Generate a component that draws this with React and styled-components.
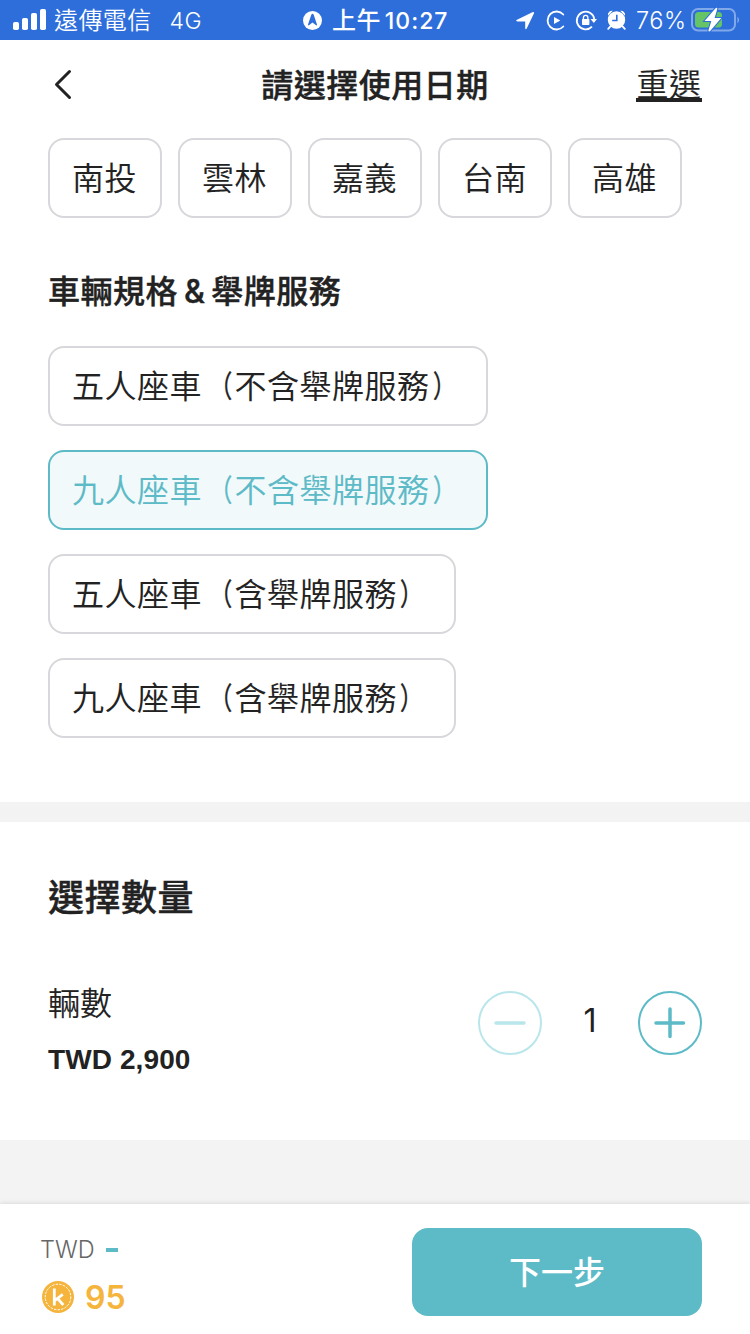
import React, { useState } from 'react'
import styled, { createGlobalStyle } from 'styled-components'

const GlobalStyle = createGlobalStyle`
  * {
    box-sizing: border-box;
  }
  body {
    margin: 0;
    background: #fff;
    color: #222;
    font-family: Inter, 'Noto Sans CJK TC', sans-serif;
  }
  button {
    font: inherit;
    color: inherit;
    background: none;
    border: 0;
    padding: 0;
  }
  h1, h2, p {
    margin: 0;
  }
  svg {
    display: block;
    flex: none;
  }
`

const Screen = styled.div`
  width: 750px;
  height: 1334px;
  display: flex;
  flex-direction: column;
  overflow: hidden;
`

const StatusBar = styled.div`
  height: 40px;
  flex: none;
  display: flex;
  align-items: center;
  background: #2e6edb;
  color: #fff;
  font-size: 24px;
  line-height: 40px;
  white-space: nowrap;
`

const StatusLeft = styled.div`
  width: 302px;
  padding-left: 13px;
  display: flex;
  align-items: center;
`

const Carrier = styled.span`
  margin-left: 8px;
  padding-top: 2px;
  font-size: 24px;
  letter-spacing: .4px;
  font-weight: 350;
`

const Network = styled.span`
  margin-left: 18px;
  padding-top: 2px;
  font-size: 23px;
  letter-spacing: .5px;
  font-weight: 350;
`

const Clock = styled.div`
  width: 213px;
  display: flex;
  align-items: center;
  gap: 10px;
  font-weight: 500;
  span {
    padding-top: 1px;
    letter-spacing: .4px;
  }
  b {
    font-weight: 550;
    font-size: 23px;
    letter-spacing: 1px;
    margin-left: 4px;
  }
`

const StatusRight = styled.div`
  display: flex;
  align-items: center;
`

const Percent = styled.span`
  width: 55px;
  padding-top: 2px;
  font-size: 23.5px;
  font-weight: 350;
  letter-spacing: .5px;
`

const Header = styled.header`
  height: 98px;
  flex: none;
  display: grid;
  grid-template-columns: 150px 1fr 150px;
  align-items: center;
  padding: 0 48px 8px;
`

const Title = styled.h1`
  padding-top: 2px;
  font-size: 32px;
  line-height: 44px;
  font-weight: 500;
  -webkit-text-stroke: .4px;
  letter-spacing: .5px;
  text-align: center;
`

const Reset = styled.button`
  justify-self: end;
  height: 34px;
  width: 66px;
  border-bottom: 4px solid #222;
  font-size: 32px;
  font-weight: 350;
  -webkit-text-stroke: .15px;
  line-height: 34px;
  letter-spacing: .5px;
  white-space: nowrap;
`

const Options = styled.div`
  display: flex;
  flex-direction: ${props => props.$column ? 'column' : 'row'};
  align-items: flex-start;
  gap: ${props => props.$column ? '24px' : '16px'};
  padding: 0 48px;
`

const Option = styled.button`
  height: 80px;
  width: ${props => props.$width}px;
  padding: 0 0 4px 22px;
  border: 2px solid ${props => props.$active ? '#5dbac7' : '#d7d7dc'};
  border-radius: 16px;
  background: ${props => props.$active ? '#f1f9fb' : '#fff'};
  color: ${props => props.$active ? '#5dbac7' : '#222'};
  font-size: 32px;
  font-weight: 350;
  -webkit-text-stroke: .1px;
  letter-spacing: .5px;
  text-align: left;
  white-space: nowrap;
`

// full-width brackets, narrowed towards the text they enclose
const Bracket = styled.span`
  display: inline-block;
  transform: ${props => props.$close ? 'translate(3px, 0)' : 'translate(-2px, 0)'} scale(.7, .94);
  transform-origin: ${props => props.$close ? 'left' : 'right'} center;
  font-weight: 400;
  -webkit-text-stroke: .5px;
`

const GroupTitle = styled.h2`
  margin: 50px 48px 31px;
  font-size: 32px;
  line-height: 47px;
  font-weight: 500;
  -webkit-text-stroke: .4px;
  letter-spacing: .5px;
  word-spacing: -3.1px;
`

const Divider = styled.div`
  height: ${props => props.$height}px;
  margin-top: ${props => props.$top || 0}px;
  flex: none;
  background: #f3f3f3;
`

const Quantity = styled.section`
  height: 318px;
  flex: none;
  padding: 49px 48px 0;
  h2 {
    font-size: 36px;
    line-height: 54px;
    font-weight: 500;
    -webkit-text-stroke: .4px;
    letter-spacing: .5px;
  }
`

const QuantityRow = styled.div`
  display: flex;
  justify-content: space-between;
  align-items: center;
  margin-top: 54px;
`

const UnitName = styled.p`
  font-size: 32px;
  font-weight: 350;
  -webkit-text-stroke: .1px;
  line-height: 50px;
`

const Price = styled.p`
  margin-top: 11px;
  letter-spacing: .1px;
  font: bold 28px/40px 'Liberation Sans', sans-serif;
`

const Stepper = styled.div`
  display: flex;
  align-items: center;
  margin-bottom: 14px;
`

const Count = styled.span`
  width: 96px;
  padding-bottom: 4px;
  font-size: 32px;
  text-align: center;
`

const Footer = styled.footer`
  height: 130px;
  flex: none;
  display: flex;
  justify-content: space-between;
  padding: 24px 48px 0 40px;
  background: #fff;
  box-shadow: 0 -1px 4px rgba(0, 0, 0, .1);
`

const Total = styled.p`
  display: flex;
  align-items: center;
  height: 42px;
  font-size: 23.5px;
  font-weight: 300;
  color: #666;
`

const Dash = styled.i`
  width: 12px;
  height: 4px;
  margin: 2px 0 0 11px;
  background: #5dbac7;
`

const Credits = styled.p`
  display: flex;
  align-items: center;
  gap: 10px;
  height: 40px;
  margin: 7px 0 0 1px;
  color: #f5b43c;
  font-size: 32px;
  font-weight: 580;
`

const Next = styled.button`
  width: 290px;
  height: 88px;
  padding-bottom: 4px;
  border-radius: 16px;
  background: #5dbac7;
  color: #fff;
  font-size: 32px;
  font-weight: 500;
`

const cities = ['南投', '雲林', '嘉義', '台南', '高雄']

const cars = [
  { seats: '五人座車', note: '不含舉牌服務', width: 440 },
  { seats: '九人座車', note: '不含舉牌服務', width: 440 },
  { seats: '五人座車', note: '含舉牌服務', width: 408 },
  { seats: '九人座車', note: '含舉牌服務', width: 408 }
]

const Signal = () => (
  <svg width='33' height='22' fill='#fff'>
    <rect x='0' y='13' width='6' height='8' rx='1.8' />
    <rect x='9' y='9' width='6' height='12' rx='1.8' />
    <rect x='18' y='4' width='6' height='17' rx='1.8' />
    <rect x='27' y='0' width='6' height='21' rx='1.8' />
  </svg>
)

const NavBadge = () => (
  <svg width='20' height='20' viewBox='0 0 20 20'>
    <circle cx='10.5' cy='10.5' r='9.5' fill='#fff' />
    <path d='M9.3 4.7Q10.5 2.8 11.7 4.7L15 14.5Q15 16 13.7 15L10.5 12.4L7.3 15Q6 16 6 14.5Z' fill='#2e6edb' />
  </svg>
)

// location, media, rotation lock, alarm
const StatusIcons = () => (
  <svg width='121' height='40' fill='#fff'>
    <path d='M1.5 20L17.4 12.2Q19.8 11.4 18.9 13.6L11.7 28.6Q10.4 30 10.2 28V21.6H2.6Q.4 21.2 1.5 20Z' />
    <path d='M48.3 14.5A9 9 0 1 0 48.3 26.5' fill='none' stroke='#fff' strokeWidth='1.8' strokeLinecap='round' />
    <path d='M39 17V24L45.3 20.5Z' />
    <path d='M77 26.6A8.8 8.8 0 1 1 79.3 19' fill='none' stroke='#fff' strokeWidth='1.8' />
    <path d='M75.5 19H82L78.8 23Z' />
    <rect x='67' y='19' width='7.4' height='6' rx='.8' />
    <path d='M68.4 19.5V17.7A2.2 2.3 0 0 1 72.9 17.7V19.5' fill='none' stroke='#fff' strokeWidth='1.3' />
    <circle cx='101.5' cy='20' r='8.7' />
    <path d='M93 15.8A4.2 4.2 0 0 1 97.8 10.7ZM110 15.8A4.2 4.2 0 0 0 105.2 10.7Z' />
    <path d='M95.2 26.6L93.2 28.8M107.8 26.6L109.8 28.8' stroke='#fff' strokeWidth='1.8' strokeLinecap='round' />
    <path d='M101.8 14.8V20.5H97.2' fill='none' stroke='#2e6edb' strokeWidth='1.6' />
  </svg>
)

const Battery = () => (
  <svg width='49' height='40'>
    <rect x='1' y='9' width='43' height='21.5' rx='6' fill='none' stroke='#fff' strokeOpacity='.4' strokeWidth='2' />
    <path d='M46.5 16.5Q49.5 20 46.5 23.5Z' fill='#fff' fillOpacity='.45' />
    <rect x='4' y='12' width='27' height='15.5' rx='3.5' fill='#65c466' />
    <path d='M24.5 8.2L13.5 21H20.3L17.4 30.5Q17.7 32.3 19.4 30.8L30.3 18.1H23.6L26.3 9Q26.3 7.2 24.5 8.2Z' fill='#fff' stroke='#2e6edb' strokeWidth='2' paintOrder='stroke' />
  </svg>
)

const BackIcon = () => (
  <svg width='24' height='32' fill='none' stroke='#222' strokeWidth='3' strokeLinecap='round' strokeLinejoin='round'>
    <path d='M21.5 2.5L8.5 15.5L21.5 28.5' />
  </svg>
)

const StepIcon = ({ plus }) => (
  <svg width='64' height='64' fill='none' stroke={plus ? '#5dbac7' : '#b9e6eb'}>
    <circle cx='32' cy='32' r='31' strokeWidth='2' />
    <path d={plus ? 'M18 32H45.5M32 18V45.5' : 'M18 32H46'} strokeWidth='3.5' strokeLinecap='round' />
  </svg>
)

const Coin = () => (
  <svg width='34' height='34' fill='none'>
    <circle cx='17' cy='17' r='16' fill='#f5b43c' />
    <circle cx='17' cy='17' r='12.8' stroke='#fff' strokeWidth='1' strokeDasharray='2.4 1.2' />
    <path d='M13.3 8.5V25.5M21.8 14.3L14 20.3M16.5 18.4L22.3 25' stroke='#fff' strokeWidth='2.8' />
  </svg>
)

function App () {
  const [car, setCar] = useState(1)
  const [count, setCount] = useState(1)

  return (
    <Screen lang='zh-Hant'>
      <GlobalStyle />
      <StatusBar>
        <StatusLeft>
          <Signal />
          <Carrier>遠傳電信</Carrier>
          <Network>4G</Network>
        </StatusLeft>
        <Clock>
          <NavBadge />
          <span>上午<b>10:27</b></span>
        </Clock>
        <StatusRight>
          <StatusIcons />
          <Percent>76%</Percent>
          <Battery />
        </StatusRight>
      </StatusBar>

      <Header>
        <button><BackIcon /></button>
        <Title>請選擇使用日期</Title>
        <Reset>重選</Reset>
      </Header>

      <Options>
        {cities.map(city => <Option key={city} $width={114}>{city}</Option>)}
      </Options>
      <GroupTitle>車輛規格 &amp; 舉牌服務</GroupTitle>
      <Options $column>
        {cars.map((item, i) => (
          <Option key={i} $width={item.width} $active={i === car} onClick={() => setCar(i)}>
            {item.seats}<Bracket>（</Bracket>{item.note}<Bracket $close>）</Bracket>
          </Option>
        ))}
      </Options>

      <Divider $height={20} $top={64} />

      <Quantity>
        <h2>選擇數量</h2>
        <QuantityRow>
          <div>
            <UnitName>輛數</UnitName>
            <Price>TWD 2,900</Price>
          </div>
          <Stepper>
            <button onClick={() => setCount(Math.max(1, count - 1))}><StepIcon /></button>
            <Count>{count}</Count>
            <button onClick={() => setCount(count + 1)}><StepIcon plus /></button>
          </Stepper>
        </QuantityRow>
      </Quantity>
      <Divider $height={64} />

      <Footer>
        <div>
          <Total>TWD<Dash /></Total>
          <Credits><Coin />95</Credits>
        </div>
        <Next>下一步</Next>
      </Footer>
    </Screen>
  )
}

export default App
